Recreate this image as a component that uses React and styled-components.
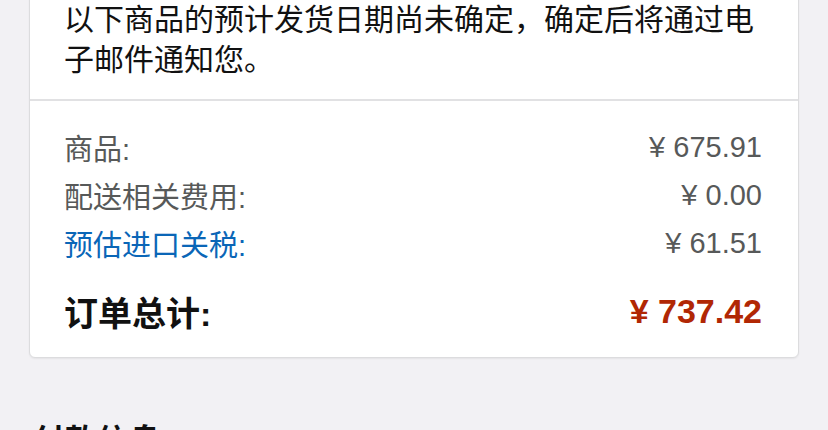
import React from 'react'
import styled, { createGlobalStyle } from 'styled-components'

const GlobalStyle = createGlobalStyle`
  html, body {
    margin: 0;
    padding: 0;
    background: #f2f1f4;
    overflow: hidden;
  }
  body {
    font-family: "Liberation Sans", "Noto Sans CJK SC", sans-serif;
  }
`

const rows = [
  { label: '商品:', value: '¥ 675.91' },
  { label: '配送相关费用:', value: '¥ 0.00' },
  { label: '预估进口关税:', value: '¥ 61.51', link: true },
]

function App() {
  return (
    <Page>
      <GlobalStyle />
      <Card>
        <Notice>
          以下商品的预计发货日期尚未确定，确定后将通过电子邮件通知您。
        </Notice>
        <Summary>
          {rows.map((r) => (
            <Row key={r.label}>
              <Label $link={r.link}>{r.label}</Label>
              <Amount>{r.value}</Amount>
            </Row>
          ))}
          <TotalRow>
            <TotalLabel>订单总计:</TotalLabel>
            <TotalAmount>¥ 737.42</TotalAmount>
          </TotalRow>
        </Summary>
      </Card>
      <SectionTitle>付款信息</SectionTitle>
    </Page>
  )
}

export default App

const Page = styled.div`
  width: 828px;
  height: 430px;
  padding: 0 29px;
  box-sizing: border-box;
  overflow: hidden;
`

const Card = styled.div`
  margin-top: -24px;
  background: #fff;
  border: 1px solid #dcdcde;
  border-radius: 6px;
  box-shadow: 0 1px 2px rgba(0, 0, 0, 0.06);
`

const Notice = styled.div`
  padding: 20px 35px 22px 34px;
  border-bottom: 2px solid #e1e1e3;
  font-family: "Noto Sans CJK SC", sans-serif;
  font-size: 30px;
  line-height: 40px;
  color: #111;
`

const Summary = styled.div`
  padding: 22px 36px 22px 34px;
`

const Row = styled.div`
  display: flex;
  justify-content: space-between;
  align-items: center;
  height: 48px;
`

const Label = styled.span`
  font-family: "Liberation Sans", "Noto Sans CJK SC", sans-serif;
  font-size: 29px;
  color: ${(p) => (p.$link ? '#0a66b7' : '#575959')};
`

const Amount = styled.span`
  font-family: "Liberation Sans", sans-serif;
  font-size: 29px;
  color: #575959;
`

const TotalRow = styled(Row)`
  margin-top: 20px;
`

const TotalLabel = styled.span`
  font-family: "Liberation Sans", "Noto Sans CJK SC", sans-serif;
  font-size: 34px;
  font-weight: 700;
  color: #111;
`

const TotalAmount = styled.span`
  font-family: "Liberation Sans", sans-serif;
  font-size: 34px;
  font-weight: 700;
  color: #b12704;
`

const SectionTitle = styled.h2`
  margin: 60px 0 0 4px;
  font-family: "Noto Sans CJK SC", sans-serif;
  font-size: 32px;
  line-height: 40px;
  font-weight: 700;
  color: #111;
`
